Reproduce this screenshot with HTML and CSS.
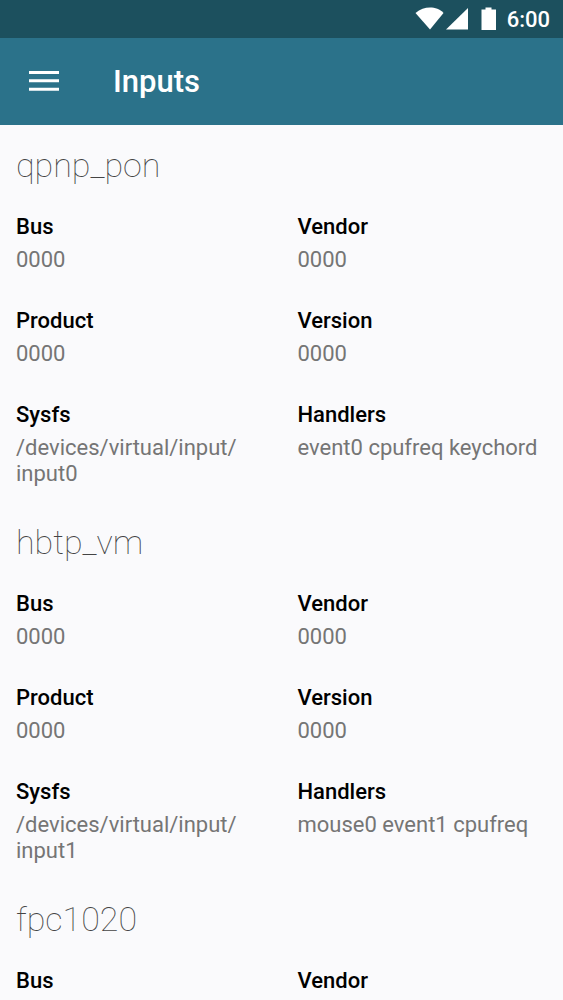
FILE: index.html
```html
<!DOCTYPE html>
<html lang="en">
<head>
<meta charset="utf-8">
<meta name="viewport" content="width=device-width, initial-scale=1">
<title>Inputs</title>
<link rel="stylesheet" href="styles.css">
</head>
<body>
<div class="status">
  <svg class="signals" width="84" height="26" viewBox="0 0 84 26" aria-hidden="true">
    <path d="M0.500 7C5 3 10 1.500 15 1.500S25 3 28.500 7L15 23.500Z"/>
    <path d="M53 2V23.500H31Z"/>
    <path d="M66.500 3.500H70.500V1.500H76.500V3.500H81V24H66.500Z"/>
  </svg>
  <span>6:00</span>
</div>
<header class="bar">
  <button class="menu" type="button" aria-label="Open menu">
    <svg width="30" height="21" viewBox="0 0 30 21" aria-hidden="true"><path d="M0 0h30v3H0zM0 8.300h30v3H0zM0 16.700h30v3H0z"/></svg>
  </button>
  <h1>Inputs</h1>
</header>
<main>
  <section>
    <h2>qpnp_pon</h2>
    <dl>
      <div><dt>Bus</dt><dd>0000</dd></div>
      <div><dt>Vendor</dt><dd>0000</dd></div>
      <div><dt>Product</dt><dd>0000</dd></div>
      <div><dt>Version</dt><dd>0000</dd></div>
      <div><dt>Sysfs</dt><dd>/devices/virtual/input/<wbr>input0</dd></div>
      <div><dt>Handlers</dt><dd>event0 cpufreq keychord</dd></div>
    </dl>
  </section>
  <section>
    <h2>hbtp_vm</h2>
    <dl>
      <div><dt>Bus</dt><dd>0000</dd></div>
      <div><dt>Vendor</dt><dd>0000</dd></div>
      <div><dt>Product</dt><dd>0000</dd></div>
      <div><dt>Version</dt><dd>0000</dd></div>
      <div><dt>Sysfs</dt><dd>/devices/virtual/input/<wbr>input1</dd></div>
      <div><dt>Handlers</dt><dd>mouse0 event1 cpufreq</dd></div>
    </dl>
  </section>
  <section>
    <h2>fpc1020</h2>
    <dl>
      <div><dt>Bus</dt></div>
      <div><dt>Vendor</dt></div>
    </dl>
  </section>
</main>
</body>
</html>
```
FILE: styles.css
```css
* { box-sizing: border-box; }
body {
  margin: 0;
  height: 100vh;
  display: flex;
  flex-direction: column;
  overflow: hidden;
  background: #fafafc;
  color: #000;
  font-family: Roboto, sans-serif;
}
svg { display: block; fill: #fff; }
.status {
  flex: none;
  display: flex;
  align-items: center;
  justify-content: flex-end;
  gap: 8px;
  height: 38px;
  padding-right: 13px;
  background: #1c505e;
  color: #fff;
  font-size: 22px;
  font-weight: 500;
}
.bar {
  flex: none;
  display: flex;
  align-items: center;
  gap: 54px;
  height: 87px;
  padding-left: 29px;
  background: #2b728a;
  color: #fff;
}
.menu { padding: 0; border: 0; background: none; }
h1 { margin: 0; font-size: 31px; line-height: 38px; font-weight: 500; }
main { flex: 1; min-height: 0; overflow: hidden; padding: 0 0 0 16px; }
section { padding: 18px 0 15px; }
h2 {
  margin: 0 0 24px;
  font-size: 34px;
  line-height: 44px;
  font-weight: 100;
  color: #444;
}
dl {
  display: grid;
  grid-template-columns: 1fr 1fr;
  column-gap: 16px;
  row-gap: 32px;
  margin: 0;
}
dt { font-size: 22px; line-height: 32px; font-weight: 500; }
dd { margin: 4px 0 0; font-size: 22px; line-height: 26px; color: #757575; }
```
